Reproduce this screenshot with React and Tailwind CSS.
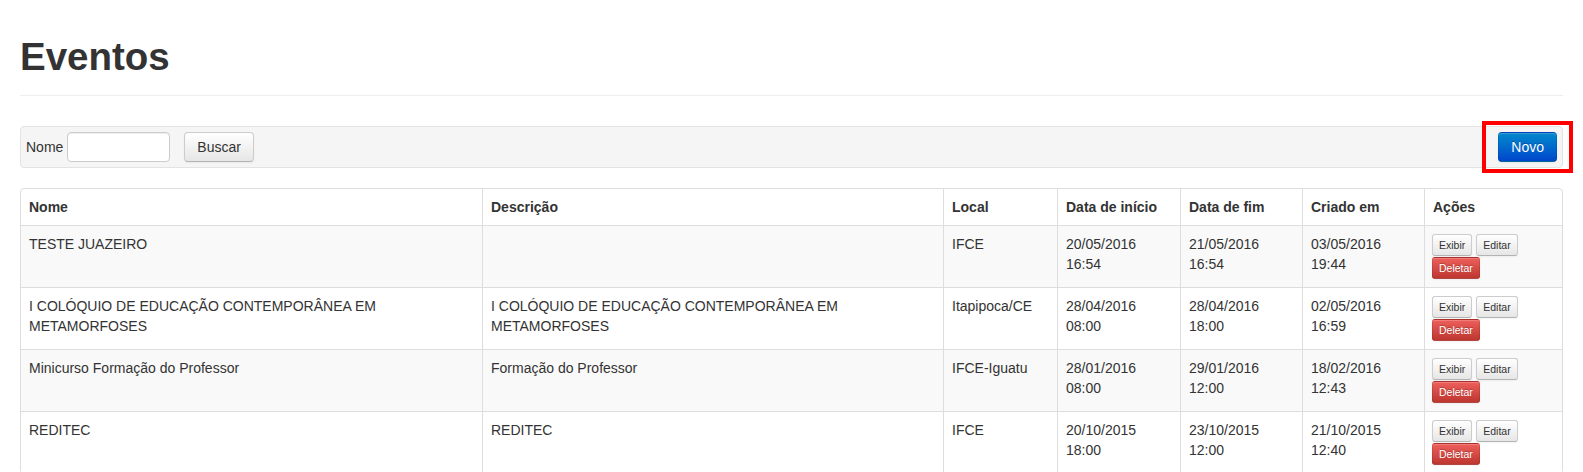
import React from "react";

const rows = [
  {
    nome: "TESTE JUAZEIRO",
    desc: "",
    local: "IFCE",
    ini: ["20/05/2016", "16:54"],
    fim: ["21/05/2016", "16:54"],
    criado: ["03/05/2016", "19:44"],
  },
  {
    nome: "I COLÓQUIO DE EDUCAÇÃO CONTEMPORÂNEA EM METAMORFOSES",
    desc: "I COLÓQUIO DE EDUCAÇÃO CONTEMPORÂNEA EM METAMORFOSES",
    local: "Itapipoca/CE",
    ini: ["28/04/2016", "08:00"],
    fim: ["28/04/2016", "18:00"],
    criado: ["02/05/2016", "16:59"],
  },
  {
    nome: "Minicurso Formação do Professor",
    desc: "Formação do Professor",
    local: "IFCE-Iguatu",
    ini: ["28/01/2016", "08:00"],
    fim: ["29/01/2016", "12:00"],
    criado: ["18/02/2016", "12:43"],
  },
  {
    nome: "REDITEC",
    desc: "REDITEC",
    local: "IFCE",
    ini: ["20/10/2015", "18:00"],
    fim: ["23/10/2015", "12:00"],
    criado: ["21/10/2015", "12:40"],
  },
];

const btnDefault =
  "bg-linear-to-b from-white to-[#e6e6e6] border border-[#cccccc] border-b-[#b3b3b3] text-[#333333] shadow-[inset_0_1px_0_rgba(255,255,255,0.2),0_1px_2px_rgba(0,0,0,0.05)]";
const btnDanger =
  "bg-linear-to-b from-[#ee5f5b] to-[#bd362f] border border-[rgba(0,0,0,0.1)] border-b-[rgba(0,0,0,0.25)] text-white [text-shadow:0_-1px_0_rgba(0,0,0,0.25)] shadow-[inset_0_1px_0_rgba(255,255,255,0.2),0_1px_2px_rgba(0,0,0,0.05)]";
const btnPrimary =
  "bg-linear-to-b from-[#0088cc] to-[#0044cc] border border-[rgba(0,0,0,0.1)] border-b-[rgba(0,0,0,0.25)] text-white [text-shadow:0_-1px_0_rgba(0,0,0,0.25)] shadow-[inset_0_1px_0_rgba(255,255,255,0.2),0_1px_2px_rgba(0,0,0,0.05)]";

function Mini({ kind, children, className = "" }) {
  return (
    <span
      className={`inline-block h-[22px] px-[6px] text-[10.5px] leading-[20px] rounded-[3px] ${
        kind === "danger" ? btnDanger : btnDefault
      } ${className}`}
    >
      {children}
    </span>
  );
}

const th =
  "align-top text-left font-bold px-[8px] py-[8px] leading-[20px] border-l border-[#dddddd]";
const td =
  "align-top text-left px-[8px] pt-[8px] pb-[8px] leading-[20px] border-l border-t border-[#dddddd]";

export default function App() {
  return (
    <div
      className="bg-white px-[20px] text-[14px] leading-[20px] text-[#333333]"
      style={{ fontFamily: '"Liberation Sans", Arial, Helvetica, sans-serif' }}
    >
      <div className="pt-[37px] pb-[18px] border-b border-[#eeeeee]">
        <h1 className="text-[38.5px] leading-[40px] font-bold text-[#333333]">
          Eventos
        </h1>
      </div>

      <div className="mt-[30px] flex items-center justify-between bg-[#f5f5f5] border border-[#e3e3e3] rounded-[4px] px-[5px] py-[5px]">
        <div className="flex items-center">
          <span>Nome</span>
          <input
            type="text"
            className="ml-[4px] w-[103px] h-[30px] bg-white border border-[#cccccc] rounded-[4px] shadow-[inset_0_1px_1px_rgba(0,0,0,0.075)] px-[6px] outline-none"
          />
          <span
            className={`ml-[14px] inline-block h-[30px] px-[12px] py-[4px] leading-[20px] rounded-[4px] ${btnDefault}`}
          >
            Buscar
          </span>
        </div>
        <div className="relative">
          <span
            className={`inline-block h-[30px] px-[12px] py-[4px] leading-[20px] rounded-[4px] ${btnPrimary}`}
          >
            Novo
          </span>
          <div className="absolute left-[-16px] right-[-16px] top-[-11px] bottom-[-11px] border-4 border-[#ff0000] pointer-events-none" />
        </div>
      </div>

      <table className="mt-[20px] w-full table-fixed border-separate border-spacing-0 border border-[#dddddd] rounded-[4px]">
        <colgroup>
          <col className="w-[461px]" />
          <col className="w-[461px]" />
          <col className="w-[114px]" />
          <col className="w-[123px]" />
          <col className="w-[122px]" />
          <col className="w-[122px]" />
          <col className="w-[138px]" />
        </colgroup>
        <thead>
          <tr>
            <th className={`${th} border-l-0`}>Nome</th>
            <th className={th}>Descrição</th>
            <th className={th}>Local</th>
            <th className={th}>Data de início</th>
            <th className={th}>Data de fim</th>
            <th className={th}>Criado em</th>
            <th className={th}>Ações</th>
          </tr>
        </thead>
        <tbody>
          {rows.map((r, i) => (
            <tr key={i} className={i % 2 === 0 ? "bg-[#f9f9f9]" : "bg-white"}>
              <td className={`${td} border-l-0`}>{r.nome}</td>
              <td className={td}>{r.desc}</td>
              <td className={td}>{r.local}</td>
              <td className={td}>
                {r.ini[0]}
                <br />
                {r.ini[1]}
              </td>
              <td className={td}>
                {r.fim[0]}
                <br />
                {r.fim[1]}
              </td>
              <td className={td}>
                {r.criado[0]}
                <br />
                {r.criado[1]}
              </td>
              <td className={`${td} pl-[7px]`}>
                <div className="flex flex-col items-start">
                  <div className="flex gap-[4px]">
                    <Mini>Exibir</Mini>
                    <Mini>Editar</Mini>
                  </div>
                  <Mini kind="danger" className="mt-[1px]">
                    Deletar
                  </Mini>
                </div>
              </td>
            </tr>
          ))}
        </tbody>
      </table>
    </div>
  );
}
